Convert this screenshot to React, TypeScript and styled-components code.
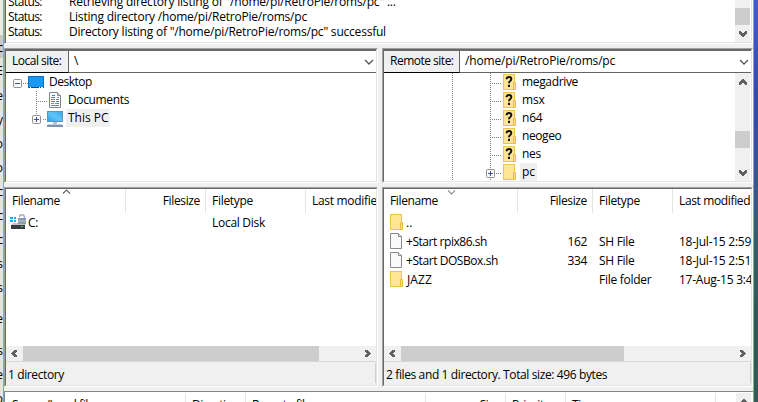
import React from 'react';
import styled, { createGlobalStyle } from 'styled-components';

const Global = createGlobalStyle`
  * { box-sizing: border-box; }
  body { margin: 0; overflow: hidden; background: #f0f0f0; }
  svg { display: block; flex: none; }
`;

const Screen = styled.div`
  display: grid;
  grid-template-columns: 3px 1px 749px 1px 4px;
  width: 758px;
  height: 402px;
  overflow: hidden;
  font: 12px/16px 'Open Sans', 'Noto Sans', sans-serif;
  color: #000;
`;

const BackWindow = styled.div`
  overflow: hidden;
  background: linear-gradient(#e9e9e9 35px, #c9c9c9 35px, #c9c9c9 58px, #e4e4e4 58px);
`;

const BackLetter = styled.div<{ $h: number }>`
  display: flex;
  align-items: flex-end;
  justify-content: flex-end;
  height: ${(p) => p.$h}px;
  line-height: 16px;
`;

const Edge = styled.div<{ $c: string }>`
  background: ${(p) => p.$c};
`;

const Desktop = styled.div`
  background: linear-gradient(#4a58cc, #4046a8 100px, #444c9c 150px, #3f5878 200px, #3b5c5c 260px, #35564d 330px, #3a5a50);
`;

const Window = styled.div`
  display: grid;
  grid-template-rows: 44px 4px 135px 4px 200px 4px 11px;
  min-width: 0;
  background: #f0f0f0;
`;

const Text = styled.span<{ $ls?: number; $w?: number; $ml?: number }>`
  flex: none;
  display: block;
  height: 16px;
  line-height: 18px;
  white-space: pre;
  letter-spacing: ${(p) => p.$ls ?? -0.4}px;
  width: ${(p) => (p.$w ? p.$w + 'px' : 'auto')};
  margin-left: ${(p) => p.$ml ?? 0}px;
`;

const LogPane = styled.div`
  display: flex;
  border-left: 1px solid #a0a0a0;
  box-shadow: inset 1px 0 #696969;
  border-right: 1px solid #fff;
  border-bottom: 1px solid #fff;
  background: #fff;
  overflow: hidden;
`;

const LogInner = styled.div`
  display: flex;
  flex: 1;
  margin-left: 1px;
  border-bottom: 1px solid #e3e3e3;
  border-right: 1px solid #e3e3e3;
`;

const LogLines = styled.div`
  flex: 1;
  margin-top: -7px;
`;

const LogRow = styled.div`
  display: flex;
  height: 15px;
  padding-left: 2px;
`;

const Columns = styled.div`
  display: grid;
  grid-template-columns: 374px 4px 371px;
  min-height: 0;
`;

const Pane = styled.div`
  display: flex;
  min-width: 0;
  border: 1px solid;
  border-color: #a0a0a0 #fff #fff #a0a0a0;
`;

const PaneInner = styled.div`
  display: flex;
  flex-direction: column;
  flex: 1;
  min-width: 0;
  border: 1px solid;
  border-color: #696969 #e3e3e3 #e3e3e3 #696969;
  background: #fff;
  overflow: hidden;
`;

const SiteBar = styled.div`
  display: flex;
  height: 23px;
  flex: none;
  border-top: 1px solid #696969;
  border-bottom: 1px solid #646464;
`;

const SiteLabel = styled.div<{ $w: number }>`
  width: ${(p) => p.$w}px;
  height: 22px;
  padding: 1px 0 0 6px;
  background: #f0f0f0;
  border-right: 1px solid #646464;
  border-bottom: 1px solid #000;
`;

const SiteCombo = styled.div`
  display: flex;
  flex: 1;
  align-items: flex-start;
  justify-content: space-between;
  padding: 1px 2px 0 5px;
`;

const TreeBody = styled.div`
  display: flex;
  flex: 1;
  min-height: 0;
`;

const TreeRows = styled.div`
  flex: 1;
`;

const TreeRow = styled.div`
  display: flex;
  height: 18px;
`;

const TreeName = styled.div<{ $sel?: boolean; $w?: number }>`
  height: 18px;
  padding-left: 2px;
  width: ${(p) => (p.$w ? p.$w + 'px' : 'auto')};
  background: ${(p) => (p.$sel ? '#f0f0f0' : 'transparent')};
`;

const VScroll = styled.div`
  display: flex;
  flex-direction: column;
  align-items: center;
  width: 15px;
  margin-right: 1px;
  flex: none;
  background: #f0f0f0;
`;

const VGap = styled.div<{ $h: number }>`
  height: ${(p) => p.$h}px;
  flex: none;
`;

const VThumb = styled.div<{ $h: number }>`
  width: 15px;
  height: ${(p) => p.$h}px;
  flex: none;
  background: #cdcdcd;
`;

const ListHeader = styled.div`
  position: relative;
  display: flex;
  height: 24px;
  flex: none;
`;

const HeadCell = styled.div<{ $w: number; $right?: boolean; $last?: boolean }>`
  display: flex;
  flex: none;
  justify-content: ${(p) => (p.$right ? 'flex-end' : 'flex-start')};
  width: ${(p) => p.$w}px;
  padding: 3px ${(p) => (p.$right ? 5 : 0)}px 0 6px;
  border-right: ${(p) => (p.$last ? 'none' : '1px solid #e5e5e5')};
`;

const SortMark = styled.div<{ $x: number; $y: number }>`
  position: absolute;
  left: ${(p) => p.$x}px;
  top: ${(p) => p.$y}px;
`;

const ListRows = styled.div`
  flex: 1;
`;

const ListRow = styled.div`
  display: flex;
  height: 19px;
`;

const Cell = styled.div<{ $w: number; $right?: boolean; $pad?: number }>`
  display: flex;
  flex: none;
  gap: 3px;
  justify-content: ${(p) => (p.$right ? 'flex-end' : 'flex-start')};
  width: ${(p) => p.$w}px;
  padding: 1px ${(p) => (p.$right ? 6 : 0)}px 0 ${(p) => p.$pad ?? 6}px;
`;

const HScroll = styled.div`
  display: flex;
  align-items: center;
  justify-content: space-between;
  height: 15px;
  flex: none;
  background: #f0f0f0;
  padding-right: 5px;
`;

const HThumb = styled.div<{ $w: number }>`
  width: ${(p) => p.$w}px;
  height: 15px;
  margin-right: auto;
  background: #cdcdcd;
`;

const HArrow = styled.div`
  display: flex;
  width: 17px;
  padding-left: 5px;
`;

const Status = styled.div`
  display: flex;
  height: 24px;
  flex: none;
  padding: 4px 0 0 2px;
  background: #f0f0f0;
  border-top: 1px solid #d7d7d7;
`;

const StatusEnd = styled.div`
  width: 1px;
  height: 20px;
  margin: -3px 0 0 auto;
  background: #d0d0d0;
`;

const Queue = styled.div`
  display: flex;
  border-top: 1px solid #828790;
  border-left: 1px solid #828790;
  background: #fff;
  overflow: hidden;
  padding-left: 1px;
`;

const QueueCell = styled(HeadCell)`
  height: 24px;
  margin-top: 1px;
`;

const QueueTail = styled.div`
  display: flex;
  margin: 1px 1px 0 auto;
  height: 24px;
`;

const Chevron = ({ dir }: { dir: 'up' | 'down' | 'left' | 'right' }) => {
  const d = {
    down: 'M0 0H2V1H3V2H5V1H6V0H8V3H7V4H6V5H5V6H3V5H2V4H1V3H0Z',
    up: 'M0 6H2V5H3V4H5V5H6V6H8V3H7V2H6V1H5V0H3V1H2V2H1V3H0Z',
    left: 'M6 0V2H5V3H4V4H5V5H6V7H3V6H2V5H1V4H0V3H1V2H2V1H3V0Z',
    right: 'M0 0V2H1V3H2V4H1V5H0V7H3V6H4V5H5V4H6V3H5V2H4V1H3V0Z',
  }[dir];
  const side = dir === 'left' || dir === 'right';
  return (
    <svg width={side ? 6 : 8} height={side ? 7 : 6} shapeRendering="crispEdges">
      <path d={d} fill="#606060" />
    </svg>
  );
};

const ComboArrow = () => (
  <svg width="10" height="18">
    <path d="M1 8L5 12L9 8" fill="none" stroke="#555" strokeWidth="1.3" />
  </svg>
);

const SortArrow = ({ up }: { up?: boolean }) => (
  <svg width="9" height="5">
    <path d={up ? 'M1 4.5L4.5 1L8 4.5' : 'M1 .5L4.5 4L8 .5'} fill="none" stroke={up ? '#606060' : '#909090'} strokeWidth="1.1" />
  </svg>
);

const Toggle = ({ x, y, plus }: { x: number; y: number; plus?: boolean }) => (
  <g>
    <rect x={x + 0.5} y={y + 0.5} width="8" height="8" rx="1" fill="#fafafa" stroke="#919191" />
    <path d={`M${x + 2} ${y + 4.5}h5${plus ? `M${x + 4.5} ${y + 2}v5` : ''}`} stroke="#3c5096" />
  </g>
);

const dots = { stroke: '#808080', strokeDasharray: '1 1', fill: 'none' };

const FolderShape = () => (
  <>
    <rect x=".5" y=".5" width="11" height="15" fill="#ffe594" stroke="#eac54f" />
    <path d="M10.5 15.5V8.5H12.5V15.5Z" fill="#ffe082" stroke="#e8bd3c" />
  </>
);

const Folder = () => (
  <svg width="13" height="16">
    <FolderShape />
  </svg>
);

const Monitor = () => (
  <svg width="16" height="16">
    <defs>
      <linearGradient id="screenBlue" x1="0" y1="1" x2="1" y2="0">
        <stop offset="0" stopColor="#2d9fe8" />
        <stop offset=".5" stopColor="#5fc4f8" />
        <stop offset="1" stopColor="#35a5ea" />
      </linearGradient>
    </defs>
    <rect x=".5" y=".5" width="15" height="10" fill="url(#screenBlue)" stroke="#6494b4" />
    <rect x="6" y="11" width="4" height="2" fill="#b5c3cf" />
    <rect x="1" y="13" width="14" height="1" fill="#b7cfdf" />
    <rect x="0" y="14" width="16" height="2" fill="#8292ae" />
  </svg>
);

const DesktopTreeRow = () => (
  <TreeRow>
    <svg width="41" height="18">
      <Toggle x={7} y={6} />
      <path d="M17 10.5H22" {...dots} />
      <rect x="22.5" y="3.5" width="15" height="11" fill="#1799f5" stroke="#146fb4" />
      <path d="M23 14.5h15" stroke="#124a78" />
      <path d="M24 14.5h1M33 14.5h1M35 14.5h2" stroke="#fff" />
    </svg>
    <TreeName>
      <Text $ls={-0.5}>Desktop</Text>
    </TreeName>
  </TreeRow>
);

const DocumentsTreeRow = () => (
  <TreeRow>
    <svg width="60" height="18">
      <path d="M30.5 0V18M32 10.5H42" {...dots} />
      <path d="M43.5 1.5H51.5L54.5 4.5V16.5H43.5Z" fill="#fff" stroke="#7e858b" />
      <path d="M51.5 1.5V4.5H54.5" fill="#ddd" stroke="#888" />
      <path d="M46 4.5h3M45 6.5h4" stroke="#2e84c4" />
      <path d="M51 6.5h2M50 8.5h3M45 10.5h4M50 10.5h3M45 14.5h8" stroke="#75828b" />
      <path d="M45 8.5h4M45 12.5h3M49 12.5h4" stroke="#4799ca" />
    </svg>
    <TreeName>
      <Text $ls={-0.36}>Documents</Text>
    </TreeName>
  </TreeRow>
);

const PcTreeRow = () => (
  <TreeRow>
    <svg width="60" height="18">
      <path d="M30.5 0V6M37 10.5H41" {...dots} />
      <Toggle x={26} y={6} plus />
      <g transform="translate(41 2)">
        <Monitor />
      </g>
    </svg>
    <TreeName $sel $w={44}>
      <Text $ls={0}>This PC</Text>
    </TreeName>
  </TreeRow>
);

const RemoteTreeRow = ({ name, open, ls }: { name: string; open?: boolean; ls?: number }) => (
  <TreeRow>
    <svg width="136" height="18">
      <path d="M68.5 0V18M106.5 0V18" {...dots} />
      <path d={open ? 'M112 10.5H117' : 'M108 10.5H117'} {...dots} />
      {open && <Toggle x={102} y={6} plus />}
      <g transform="translate(119 1)">
        <FolderShape />
        {!open && (
          <path
            d="M3.7 5.3V4.2Q4 3 6 3Q8.3 3 8.3 5Q8.3 6.2 7.2 7Q6 7.8 6 9.3M6 10.8V13"
            fill="none"
            stroke="#101010"
            strokeWidth="2"
          />
        )}
      </g>
    </svg>
    <TreeName $sel={open} $w={open ? 17 : undefined}>
      <Text $ls={ls}>{name}</Text>
    </TreeName>
  </TreeRow>
);

const FileIcon = () => (
  <svg width="13" height="16">
    <path d="M.5 .5H8.5L11.5 3.5V15.5H.5Z" fill="#fafafa" stroke="#8b8b8b" />
    <path d="M8.5 .5V3.5H11.5" fill="#ddd" stroke="#8b8b8b" />
  </svg>
);

const DriveIcon = () => (
  <svg width="16" height="16">
    <path d="M0 3h3v2H0zM4 3h2v2H4zM0 6h3v2H0zM4 6h2v2H4z" fill="#12b2ee" />
    <path d="M9.7 3V2.2Q9.7 .8 12 .8Q14.3 .8 14.3 3V4" fill="none" stroke="#a4abb1" strokeWidth="1.4" />
    <rect x="8" y="4" width="8" height="6" fill="#8c9eac" />
    <path d="M8 7h8" stroke="#b7c4ce" />
    <path d="M3 9h5v1h7l1 1H1z" fill="#c0c4c8" />
    <rect x="1" y="11" width="14" height="4" fill="#393d3f" />
    <rect x="11" y="12" width="2" height="1" fill="#3ee053" />
  </svg>
);

const HBar = ({ thumb }: { thumb: number }) => (
  <HScroll>
    <HArrow>
      <Chevron dir="left" />
    </HArrow>
    <HThumb $w={thumb} />
    <Chevron dir="right" />
  </HScroll>
);

const remoteDirs: [string, number][] = [
  ['megadrive', -0.34],
  ['msx', -0.2],
  ['n64', -0.2],
  ['neogeo', -0.4],
  ['nes', -0.3],
];

const remoteFiles = [
  { name: '..', ls: 0, size: '', type: '', date: '' },
  { name: '+Start rpix86.sh', ls: -0.45, size: '162', type: 'SH File', date: '18-Jul-15 2:59' },
  { name: '+Start DOSBox.sh', ls: -0.43, size: '334', type: 'SH File', date: '18-Jul-15 2:51' },
  { name: 'JAZZ', ls: 0.1, size: '', type: 'File folder', date: '17-Aug-15 3:48' },
];

const logLines: [string, number][] = [
  ['Retrieving directory listing of "/home/pi/RetroPie/roms/pc" ...', -0.2],
  ['Listing directory /home/pi/RetroPie/roms/pc', -0.21],
  ['Directory listing of "/home/pi/RetroPie/roms/pc" successful', -0.21],
];

const backLetters: [string, number][] = [
  ['c', 56], ['E', 23], ['e', 25], ['y', 24], ['o', 24], ['o', 24], ['c', 24], ['c', 24],
  ['c', 24], ['s', 24], ['s', 24], ['e', 31], ['s', 32], ['e', 24], ['o', 24],
];

export default function App() {
  return (
    <>
      <Global />
      <Screen>
        <BackWindow>
          {backLetters.map(([ch, h], i) => (
            <BackLetter key={i} $h={h}>
              {ch}
            </BackLetter>
          ))}
        </BackWindow>
        <Edge $c="#7ba7d2" />
        <Window>
          <LogPane>
            <LogInner>
              <LogLines>
                {logLines.map(([line, ls]) => (
                  <LogRow key={line}>
                    <Text $ls={-0.6} $w={61}>Status:</Text>
                    <Text $ls={ls}>{line}</Text>
                  </LogRow>
                ))}
              </LogLines>
              <VScroll>
                <VGap $h={8} />
                <VThumb $h={17} />
                <VGap $h={6} />
                <Chevron dir="down" />
              </VScroll>
            </LogInner>
          </LogPane>
          <div />
          <Columns>
            <Pane>
              <PaneInner>
                <SiteBar>
                  <SiteLabel $w={63}>
                    <Text $ls={-0.5}>Local site:</Text>
                  </SiteLabel>
                  <SiteCombo>
                    <Text>\</Text>
                    <ComboArrow />
                  </SiteCombo>
                </SiteBar>
                <TreeBody>
                  <TreeRows>
                    <DesktopTreeRow />
                    <DocumentsTreeRow />
                    <PcTreeRow />
                  </TreeRows>
                </TreeBody>
              </PaneInner>
            </Pane>
            <div />
            <Pane>
              <PaneInner>
                <SiteBar>
                  <SiteLabel $w={76}>
                    <Text $ls={-0.5}>Remote site:</Text>
                  </SiteLabel>
                  <SiteCombo>
                    <Text $ls={-0.17}>/home/pi/RetroPie/roms/pc</Text>
                    <ComboArrow />
                  </SiteCombo>
                </SiteBar>
                <TreeBody>
                  <TreeRows>
                    {remoteDirs.map(([name, ls]) => (
                      <RemoteTreeRow key={name} name={name} ls={ls} />
                    ))}
                    <RemoteTreeRow name="pc" open ls={-0.1} />
                  </TreeRows>
                  <VScroll>
                    <VGap $h={6} />
                    <Chevron dir="up" />
                    <VGap $h={46} />
                    <VThumb $h={17} />
                    <VGap $h={22} />
                    <Chevron dir="down" />
                  </VScroll>
                </TreeBody>
              </PaneInner>
            </Pane>
          </Columns>
          <div />
          <Columns>
            <Pane>
              <PaneInner>
                <ListHeader>
                  <SortMark $x={56} $y={0}>
                    <SortArrow up />
                  </SortMark>
                  <HeadCell $w={120}><Text $ls={-0.36}>Filename</Text></HeadCell>
                  <HeadCell $w={80} $right><Text $ls={-0.36}>Filesize</Text></HeadCell>
                  <HeadCell $w={100}><Text $ls={-0.29}>Filetype</Text></HeadCell>
                  <HeadCell $w={120} $last><Text $ls={-0.3}>Last modified</Text></HeadCell>
                </ListHeader>
                <ListRows>
                  <ListRow>
                    <Cell $w={200} $pad={4}>
                      <DriveIcon />
                      <Text $ml={-1}>C:</Text>
                    </Cell>
                    <Cell $w={100}><Text $ls={-0.28}>Local Disk</Text></Cell>
                  </ListRow>
                </ListRows>
                <HBar thumb={296} />
                <Status>
                  <Text $ls={-0.38}>1 directory</Text>
                  <StatusEnd />
                </Status>
              </PaneInner>
            </Pane>
            <div />
            <Pane>
              <PaneInner>
                <ListHeader>
                  <SortMark $x={63} $y={1}>
                    <SortArrow />
                  </SortMark>
                  <HeadCell $w={134}><Text $ls={-0.36}>Filename</Text></HeadCell>
                  <HeadCell $w={75} $right><Text $ls={-0.36}>Filesize</Text></HeadCell>
                  <HeadCell $w={80}><Text $ls={-0.29}>Filetype</Text></HeadCell>
                  <HeadCell $w={120} $last><Text $ls={-0.36}>Last modified</Text></HeadCell>
                </ListHeader>
                <ListRows>
                  {remoteFiles.map((f) => (
                    <ListRow key={f.name}>
                      <Cell $w={134}>
                        {f.size ? <FileIcon /> : <Folder />}
                        <Text $ls={f.ls} $ml={f.name === 'JAZZ' ? 1 : 0}>{f.name}</Text>
                      </Cell>
                      <Cell $w={75} $right><Text $ls={-0.4}>{f.size}</Text></Cell>
                      <Cell $w={80}><Text $ls={-0.28}>{f.type}</Text></Cell>
                      <Cell $w={120}><Text $ls={-0.26}>{f.date}</Text></Cell>
                    </ListRow>
                  ))}
                </ListRows>
                <HBar thumb={223} />
                <Status>
                  <Text $ls={-0.38}>2 files and 1 directory. Total size: 496 bytes</Text>
                  <StatusEnd />
                </Status>
              </PaneInner>
            </Pane>
          </Columns>
          <div />
          <Queue>
            <QueueCell $w={180}><Text $ls={-0.4}>Server/Local file</Text></QueueCell>
            <QueueCell $w={60}><Text $ls={-0.4}>Direction</Text></QueueCell>
            <QueueCell $w={180}><Text $ls={-0.4}>Remote file</Text></QueueCell>
            <QueueCell $w={80} $right><Text $ls={-0.4}>Size</Text></QueueCell>
            <QueueCell $w={60}><Text $ls={-0.4}>Priority</Text></QueueCell>
            <QueueCell $w={150}><Text $ls={-0.4}>Time</Text></QueueCell>
            <QueueTail>
              <VScroll>
                <VGap $h={6} />
                <Chevron dir="up" />
              </VScroll>
            </QueueTail>
          </Queue>
        </Window>
        <Edge $c="#6fa8e0" />
        <Desktop />
      </Screen>
    </>
  );
}
